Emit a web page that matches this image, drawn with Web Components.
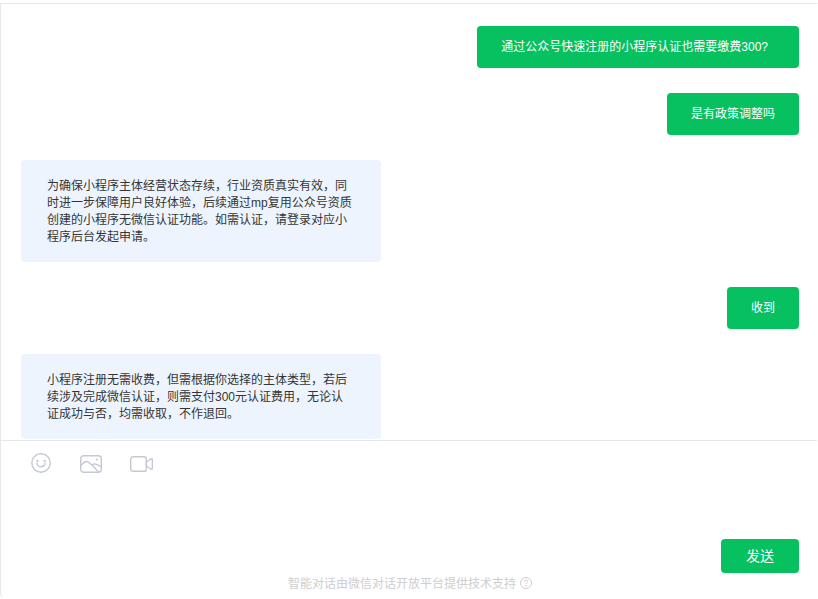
<!DOCTYPE html>
<html lang="zh-CN">
<head>
<meta charset="utf-8">
<title>智能对话</title>
<style>
  html, body { margin: 0; height: 100%; background: #fff; }
  body { font-family: "Liberation Sans", "Noto Sans CJK SC", sans-serif; }
</style>
</head>
<body>
<chat-window>
  <chat-bubble side="me" style="--pad-end: 31px">通过公众号快速注册的小程序认证也需要缴费300?</chat-bubble>
  <chat-bubble side="me">是有政策调整吗</chat-bubble>
  <chat-bubble side="bot">为确保小程序主体经营状态存续，行业资质真实有效，同时进一步保障用户良好体验，后续通过mp复用公众号资质创建的小程序无微信认证功能。如需认证，请登录对应小程序后台发起申请。</chat-bubble>
  <chat-bubble side="me">收到</chat-bubble>
  <chat-bubble side="bot">小程序注册无需收费，但需根据你选择的主体类型，若后续涉及完成微信认证，则需支付300元认证费用，无论认证成功与否，均需收取，不作退回。</chat-bubble>
  <chat-composer slot="composer"></chat-composer>
</chat-window>

<script>
class ChatWindow extends HTMLElement {
  constructor() {
    super();
    this.attachShadow({ mode: 'open' });
    this.shadowRoot.innerHTML = `
      <style>
        :host {
          display: flex;
          flex-direction: column;
          box-sizing: border-box;
          height: 599px;
          padding-top: 3px;
        }
        .frame {
          flex: 1;
          display: flex;
          flex-direction: column;
          min-height: 0;
          border: 1px solid #e8e8e8;
          border-right-color: transparent;
          border-bottom-color: transparent;
          border-radius: 0 0 6px 6px;
        }
        .messages {
          height: 437px;
          box-sizing: border-box;
          padding: 22px 18px 0 20px;
          display: flex;
          flex-direction: column;
          gap: 25px;
          overflow: hidden;
          border-bottom: 1px solid #e4e7ed;
          flex: none;
        }
      </style>
      <div class="frame">
        <div class="messages"><slot></slot></div>
        <slot name="composer"></slot>
      </div>
    `;
  }
}

class ChatBubble extends HTMLElement {
  constructor() {
    super();
    this.attachShadow({ mode: 'open' });
    this.shadowRoot.innerHTML = `
      <style>
        :host {
          display: flex;
          flex: none;
          font-size: 12px;
          line-height: 17px;
        }
        :host([side="me"]) { justify-content: flex-end; }
        .bubble {
          box-sizing: border-box;
          border-radius: 4px;
          word-break: break-all;
        }
        :host([side="me"]) .bubble {
          background: #07c160;
          color: #fff;
          padding: 13px var(--pad-end, 24px) 12px 24px;
        }
        :host([side="bot"]) .bubble {
          width: 360px;
          background: #edf4fe;
          color: #353535;
          padding: 18px 26px 16px;
        }
      </style>
      <div class="bubble"><slot></slot></div>
    `;
  }
}

class ChatComposer extends HTMLElement {
  constructor() {
    super();
    this.attachShadow({ mode: 'open' });
    this.shadowRoot.innerHTML = `
      <style>
        :host {
          display: flex;
          flex-direction: column;
          flex: 1;
          min-height: 0;
          padding: 12px 18px 0 30px;
        }
        .tools {
          display: flex;
          align-items: flex-end;
          gap: 28.5px;
          height: 20px;
        }
        svg { display: block; fill: none; stroke: #c5c9d3; stroke-width: 1.4; }
        .video { margin-bottom: 1px; }
        .actions {
          display: flex;
          justify-content: flex-end;
          margin-top: 66px;
        }
        button {
          width: 78px;
          height: 34px;
          border: none;
          border-radius: 4px;
          background: #07c160;
          color: #fff;
          font: 14px "Liberation Sans", "Noto Sans CJK SC", sans-serif;
          padding: 0 0 2px;
        }
        .footer {
          display: flex;
          justify-content: center;
          align-items: center;
          gap: 4px;
          margin: 1px -18px 0 -28px;
          height: 17px;
          font-size: 12px;
          color: #cecece;
        }
        .footer svg { stroke: #cecece; stroke-width: 1; margin-top: 1px; }
      </style>
      <div class="tools">
        <svg width="20" height="20" viewBox="0 0 20 20" aria-label="表情">
          <circle cx="10" cy="10" r="9.2"/>
          <path d="M5.8 10.4c.7 2.2 2.3 3.4 4.2 3.4s3.5-1.2 4.2-3.4" stroke-linecap="round"/>
          <circle cx="6.4" cy="8" r=".5"/>
          <circle cx="13.6" cy="8" r=".5"/>
        </svg>
        <svg width="22" height="18" viewBox="0 0 22 18" aria-label="图片">
          <rect x=".7" y=".7" width="20.6" height="16.6" rx="3"/>
          <path d="M1 10.5c1.800-2.300 3.600-4 5.400-4 3 0 7.600 5.600 12.400 10.800" stroke-linejoin="round"/>
          <path d="M11.800 10c1.300-.8 2.500-1.100 3.800-.9 2 .3 4 1.500 5.600 3"/>
          <circle cx="16.800" cy="4.600" r="1.100" fill="#c5c9d3" stroke="none"/>
        </svg>
        <svg class="video" width="23" height="16" viewBox="0 0 23 16" aria-label="视频">
          <rect x=".7" y=".7" width="15.600" height="14.600" rx="2.400"/>
          <path d="M16.300 6.200l4.700-3.400c.6-.4 1.300 0 1.300.7v9c0 .7-.7 1.100-1.300.7l-4.700-3.400z" stroke-linejoin="round"/>
        </svg>
      </div>
      <div class="actions"><button type="button">发送</button></div>
      <div class="footer">
        <span>智能对话由微信对话开放平台提供技术支持</span>
        <svg width="12" height="12" viewBox="0 0 12 12" aria-label="帮助">
          <circle cx="6" cy="6" r="5.500"/>
          <path d="M4.400 4.700c0-1 .7-1.600 1.600-1.600s1.600.6 1.600 1.400c0 1.200-1.600 1.300-1.600 2.600"/>
          <circle cx="6" cy="8.800" r=".4"/>
        </svg>
      </div>
    `;
  }
}

customElements.define('chat-window', ChatWindow);
customElements.define('chat-bubble', ChatBubble);
customElements.define('chat-composer', ChatComposer);
</script>
</body>
</html>
